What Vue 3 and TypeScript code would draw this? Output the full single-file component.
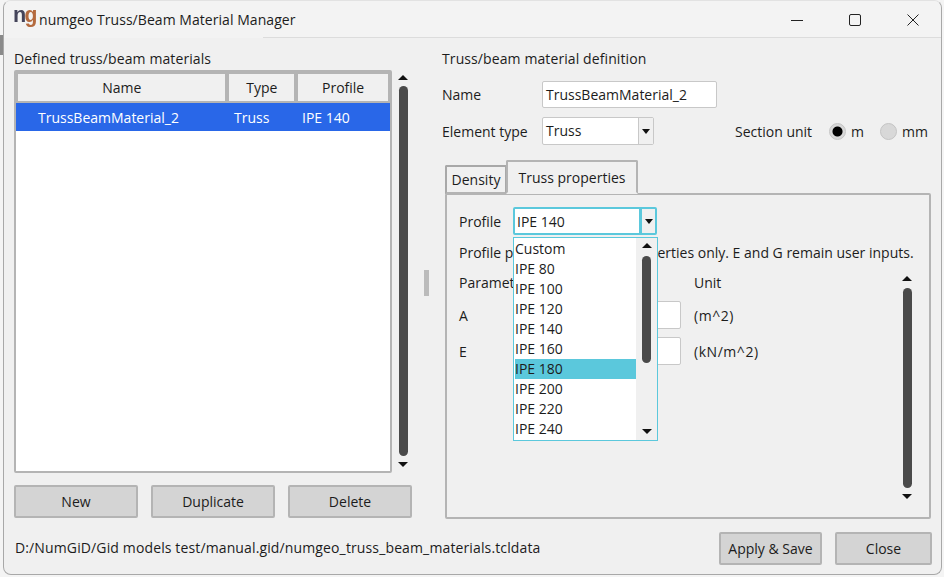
<script setup lang="ts">
const columns = [
  { label: 'Name', width: 208 },
  { label: 'Type', width: 65 },
  { label: 'Profile', width: 90 }
]
const profiles = ['Custom', 'IPE 80', 'IPE 100', 'IPE 120', 'IPE 140', 'IPE 160', 'IPE 180', 'IPE 200', 'IPE 220', 'IPE 240']
</script>

<template>
  <div class="page">
    <i class="behind"></i>
    <div class="win">
      <header class="titlebar">
        <span class="logo"><span class="logo-n">n</span><span class="logo-g">g</span></span>
        <span class="title">numgeo Truss/Beam Material Manager</span>
        <div class="controls">
          <svg width="12" height="12" viewBox="0 0 12 12"><path d="M0 6.5h12" stroke="#222" fill="none" /></svg>
          <svg width="12" height="12" viewBox="0 0 12 12"><rect x=".5" y=".5" width="11" height="11" rx="1.5" stroke="#222" fill="none" /></svg>
          <svg width="12" height="12" viewBox="0 0 12 12"><path d="M.5.5l11 11M11.5.5l-11 11" stroke="#222" fill="none" /></svg>
        </div>
      </header>

      <main class="body">
        <section class="left">
          <div class="caption">Defined truss/beam materials</div>
          <div class="table-row">
            <div class="table">
              <div class="thead">
                <div v-for="c in columns" :key="c.label" class="th" :style="{ width: c.width + 'px' }">{{ c.label }}</div>
              </div>
              <div class="tr-selected">
                <span class="td-name">TrussBeamMaterial_2</span>
                <span class="td-type">Truss</span>
                <span>IPE 140</span>
              </div>
            </div>
            <div class="scrollbar">
              <i class="arrow up"></i>
              <i class="thumb"></i>
              <i class="arrow down"></i>
            </div>
          </div>
          <div class="left-buttons">
            <button class="btn">New</button>
            <button class="btn">Duplicate</button>
            <button class="btn">Delete</button>
          </div>
        </section>

        <div class="sash"><i></i></div>

        <section class="right">
          <div class="caption">Truss/beam material definition</div>
          <div class="form-row name-row">
            <label>Name</label>
            <div class="entry name-entry">TrussBeamMaterial_2</div>
          </div>
          <div class="form-row type-row">
            <label>Element type</label>
            <div class="combo type-combo">
              <span class="combo-text">Truss</span>
              <span class="combo-btn"><i class="arrow down"></i></span>
            </div>
            <span class="unit-label">Section unit</span>
            <span class="radio first on"></span><span class="radio-text">m</span>
            <span class="radio"></span><span class="radio-text">mm</span>
          </div>

          <div class="tabs">
            <div class="tab">Density</div>
            <div class="tab active">Truss properties</div>
          </div>
          <div class="panel">
            <div class="form-row profile-row">
              <label>Profile</label>
              <div class="combo profile-combo">
                <span class="combo-text">IPE 140</span>
                <span class="combo-btn"><i class="arrow down"></i></span>
              </div>
            </div>
            <div class="note">Profile presets fill section properties only. E and G remain user inputs.</div>
            <div class="params">
              <div class="param-grid">
                <span>Parameter</span><span></span><span>Unit</span>
                <span>A</span><div class="entry"></div><span class="unit">(m^2)</span>
                <span>E</span><div class="entry"></div><span class="unit">(kN/m^2)</span>
              </div>
              <div class="scrollbar inner">
                <i class="arrow up"></i>
                <i class="thumb"></i>
                <i class="arrow down"></i>
              </div>
            </div>

            <div class="dropdown">
              <ul>
                <li v-for="p in profiles" :key="p" :class="{ hot: p === 'IPE 180' }">{{ p }}</li>
              </ul>
              <div class="scrollbar drop">
                <i class="arrow up"></i>
                <i class="thumb"></i>
                <i class="arrow down"></i>
              </div>
            </div>
          </div>
        </section>
      </main>

      <footer class="status">
        <span class="path">D:/NumGiD/Gid models test/manual.gid/numgeo_truss_beam_materials.tcldata</span>
        <button class="btn apply">Apply &amp; Save</button>
        <button class="btn close">Close</button>
      </footer>
    </div>
  </div>
</template>

<style>
html, body {
  margin: 0;
  background: #fff;
}
</style>

<style scoped>
.page {
  position: relative;
  box-sizing: border-box;
  width: 944px;
  height: 577px;
  padding: 0 2px 2px 3px;
  background: #f4f4f4;
  overflow: hidden;
}
/* sliver of whatever sits behind the dialog */
.behind {
  position: absolute;
  left: 0;
  top: 35px;
  width: 3px;
  height: 20px;
  background: #8a8a8a;
}
.win {
  position: relative;
  box-sizing: border-box;
  width: 939px;
  height: 575px;
  background: #f0f0f0;
  border: 1px solid #a8a8a8;
  border-top-color: #e2e2e2;
  border-radius: 8px;
  display: flex;
  flex-direction: column;
  font-family: "Open Sans", "Noto Sans", sans-serif;
  font-size: 14px;
  color: #1c1c1c;
  overflow: hidden;
}
.titlebar {
  position: relative;
  height: 37px;
  flex: none;
  display: flex;
  align-items: center;
  padding-left: 9px;
  box-sizing: border-box;
  background: #f3f3f3;
}
.titlebar::after {
  content: "";
  position: absolute;
  left: 259px;
  right: 0;
  bottom: 0;
  height: 1px;
  background: #dcdcdc;
}
.logo {
  font-family: "Liberation Mono", monospace;
  font-weight: 700;
  font-size: 22px;
  line-height: 22px;
  width: 26px;
  margin-top: -5px;
  letter-spacing: -2.2px;
  filter: blur(.3px);
}
.logo-n { color: #44445a; }
.logo-g { color: #b46a3e; }
.title { letter-spacing: .05px; }
.controls {
  margin-left: auto;
  display: flex;
  gap: 46px;
  padding-right: 22px;
}
.body {
  flex: none;
  height: 482px;
  display: flex;
}
.left {
  width: 398px;
  flex: none;
  padding-left: 10px;
  display: flex;
  flex-direction: column;
}
.caption {
  line-height: 20px;
  margin-top: 11px;
  letter-spacing: .1px;
}
.table-row {
  display: flex;
  margin-top: 1px;
  height: 403px;
}
.table {
  width: 378px;
  box-sizing: border-box;
  border: 2px solid #b4b4b4;
  border-radius: 2px;
  background: #fff;
}
.thead {
  display: flex;
  gap: 4px;
  padding: 2px;
  background: #b4b4b4;
}
.th {
  box-sizing: border-box;
  height: 27px;
  background: #f0f0f0;
  line-height: 27px;
  text-align: center;
}
.tr-selected {
  height: 28px;
  background: #2967e8;
  color: #fff;
  display: flex;
  align-items: center;
}
.td-name { width: 196px; margin-left: 22px; }
.td-type { width: 68px; }
.scrollbar {
  width: 18px;
  flex: none;
  display: flex;
  flex-direction: column;
  align-items: center;
}
.table-row .scrollbar { margin-left: 2px; padding: 5px 0 6px; }
.arrow {
  display: block;
  width: 0;
  height: 0;
  border-left: 5px solid transparent;
  border-right: 5px solid transparent;
}
.arrow.up { border-bottom: 5px solid #111; }
.arrow.down { border-top: 5px solid #111; }
.thumb {
  display: block;
  flex: 1;
  width: 9px;
  margin: 6px 0;
  background: #4a4a4a;
  border-radius: 5px;
}
.left-buttons {
  display: flex;
  gap: 13px;
  margin-top: 12px;
}
.btn {
  box-sizing: border-box;
  width: 124px;
  height: 33px;
  padding: 0 0 1px;
  background: #d4d4d4;
  border: 2px solid #b4b4b4;
  border-radius: 2px;
  font: inherit;
  color: inherit;
}
.sash {
  width: 30px;
  flex: none;
  display: flex;
  align-items: center;
}
.sash i {
  display: block;
  width: 5px;
  height: 26px;
  margin: 8px 0 0 12px;
  background: #bbb;
}
.right {
  flex: 1;
  display: flex;
  flex-direction: column;
  min-width: 0;
  padding-right: 10px;
}
.form-row {
  display: flex;
  align-items: center;
}
.form-row label { width: 100px; flex: none; }
.name-row { margin-top: 12px; }
.type-row { margin-top: 9px; white-space: nowrap; }
.entry {
  box-sizing: border-box;
  height: 28px;
  background: #fff;
  border: 1px solid #c8c8c8;
  border-radius: 2px;
  padding-left: 3px;
  line-height: 26px;
}
.name-entry { width: 175px; height: 27px; line-height: 25px; }
.combo {
  box-sizing: border-box;
  height: 28px;
  display: flex;
  background: #fff;
  border: 1px solid #c8c8c8;
  border-radius: 2px;
}
.combo-text { flex: 1; padding-left: 3px; line-height: 26px; }
.combo-btn {
  width: 14px;
  flex: none;
  background: #f0f0f0;
  border-left: 1px solid #c8c8c8;
  display: flex;
  align-items: center;
  justify-content: center;
}
.combo-btn .arrow { border-left-width: 4px; border-right-width: 4px; }
.type-combo { width: 112px; }
.unit-label { margin-left: 81px; }
.radio {
  box-sizing: border-box;
  width: 17px;
  height: 17px;
  margin-left: 16px;
  border-radius: 50%;
  background: #d8d8d8;
  border: 1px solid #c4c4c4;
}
.radio.first { margin-left: 17px; }
.radio.on {
  background: radial-gradient(circle, #000 0 4.5px, #d8d8d8 5.5px);
}
.radio-text { margin-left: 5px; }
.tabs {
  display: flex;
  align-items: flex-end;
  margin: 15px 0 0 3px;
  height: 34px;
  position: relative;
  z-index: 1;
}
.tab {
  box-sizing: border-box;
  height: 29px;
  width: 62px;
  border: 2px solid #a8a8a8;
  border-bottom-color: #b4b4b4;
  border-radius: 2px 2px 0 0;
  text-align: center;
  line-height: 26px;
}
.tab.active {
  height: 34px;
  width: 132px;
  margin-left: -1px;
  border-color: #b4b4b4;
  border-bottom-color: #f0f0f0;
  line-height: 32px;
  background: #f0f0f0;
}
.panel {
  position: relative;
  box-sizing: border-box;
  height: 326px;
  margin: -1px 0 0 3px;
  border: 2px solid #b4b4b4;
  border-radius: 2px;
  padding: 12px 0 0 12px;
}
.profile-row label { width: 54px; }
.profile-combo {
  width: 144px;
  height: 28px;
  border: 2px solid #5bc8dc;
}
.profile-combo .combo-text { padding-left: 2px; }
.profile-combo .combo-btn { width: 13px; border-left: 3px solid #5bc8dc; }
.note { margin-top: 8px; line-height: 20px; white-space: nowrap; }
.params { display: flex; margin-top: 9px; }
.param-grid {
  display: grid;
  grid-template-columns: 167px 42px auto;
  grid-template-rows: 21px 28px 28px;
  gap: 8px 13px;
  align-items: center;
  align-content: start;
  width: 439px;
}
.unit { letter-spacing: .55px; }
.scrollbar.inner { height: 227px; padding-top: 4px; box-sizing: border-box; }
.scrollbar.inner .thumb { margin: 7px 0 6px; }
.dropdown {
  position: absolute;
  left: 66px;
  top: 42px;
  z-index: 2;
  width: 145px;
  height: 204px;
  box-sizing: border-box;
  background: #fff;
  border: 1px solid #5bc8dc;
  display: flex;
}
.dropdown ul {
  list-style: none;
  margin: 0;
  padding: 1px 0 0 1px;
  flex: 1;
}
.dropdown li {
  height: 20px;
  line-height: 20px;
}
.dropdown li.hot { background: #5bc8dc; }
.scrollbar.drop {
  width: 21px;
  box-sizing: border-box;
  background: #f0f0f0;
  padding: 5px 0 6px;
}
.scrollbar.drop .thumb { margin: 8px 0 66px; }
.status {
  flex: none;
  height: 54px;
  display: flex;
  align-items: flex-start;
  padding: 12px 9px 0 11px;
  box-sizing: border-box;
}
.path { flex: 1; line-height: 32px; letter-spacing: .13px; }
.apply { width: 103px; margin-right: 13px; }
.close { width: 97px; }
</style>
